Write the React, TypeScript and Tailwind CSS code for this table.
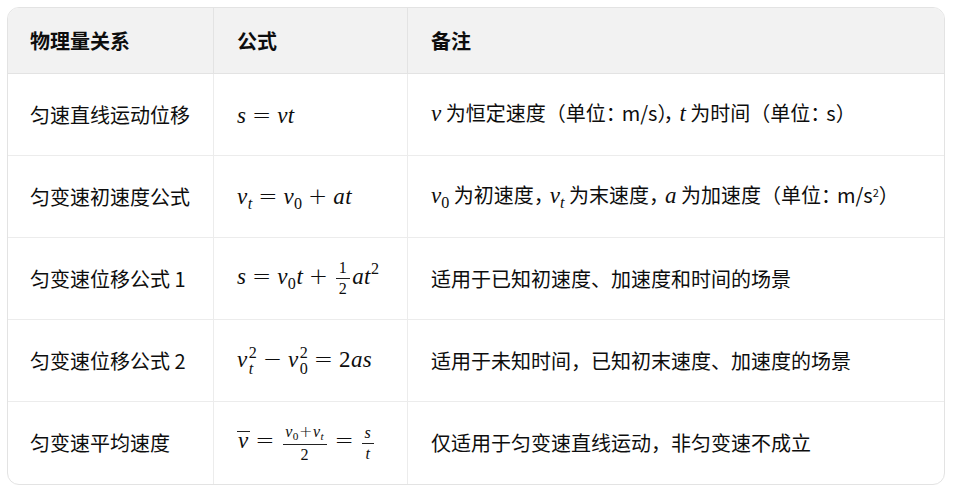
import type { ReactNode } from "react";

const mathFont = "font-['Liberation_Serif',serif]";

function M({ children }: { children: ReactNode }) {
  return <span className={`${mathFont} text-[23px] italic leading-none whitespace-nowrap tracking-[0.02em]`}>{children}</span>;
}

function Up({ children }: { children: ReactNode }) {
  return <span className="not-italic">{children}</span>;
}

function Sub({ children }: { children: ReactNode }) {
  return <span className="text-[0.7em] align-[-0.3em]">{children}</span>;
}

function Sup({ children }: { children: ReactNode }) {
  return <span className="not-italic text-[0.7em] align-[0.6em]">{children}</span>;
}

function SupSub({ sup, sub }: { sup: ReactNode; sub: ReactNode }) {
  return (
    <span className="inline-flex flex-col text-[0.7em] leading-[1] align-[0.55em] ml-[1px]">
      <span className="not-italic">{sup}</span>
      <span>{sub}</span>
    </span>
  );
}

// operators: DejaVu Sans gives the wider = + − of TeX fonts
function Op({ children, small }: { children: ReactNode; small?: boolean }) {
  return (
    <span
      className={`not-italic font-['DejaVu_Sans',sans-serif] font-light ${small ? "" : "mx-[0.24em]"}`}
    >
      {children}
    </span>
  );
}

function Frac({ num, den }: { num: ReactNode; den: ReactNode }) {
  return (
    <span className="inline-flex flex-col items-center align-middle text-[0.7em] leading-[1.1] mx-[0.15em]">
      <span className="px-[0.15em] pb-[1px] border-b border-[#222]">{num}</span>
      <span className="px-[0.15em] pt-[1px]">{den}</span>
    </span>
  );
}

function Note({ children }: { children: ReactNode }) {
  return <span className={`${mathFont} text-[23px] italic`}>{children}</span>;
}

// closing fullwidth punctuation, trimmed a little like the reference font
function Close({ children }: { children: ReactNode }) {
  return <span className="tracking-[-0.2em]">{children}</span>;
}

const rows: { name: string; formula: ReactNode; note: ReactNode }[] = [
  {
    name: "匀速直线运动位移",
    formula: (
      <M>
        s<Op>=</Op>vt
      </M>
    ),
    note: (
      <>
        <Note>v</Note> 为恒定速度（单位<Close>：</Close>m/s<Close>）</Close>
        <Close>，</Close>
        <Note>t</Note> 为时间（单位<Close>：</Close>s<Close>）</Close>
      </>
    ),
  },
  {
    name: "匀变速初速度公式",
    formula: (
      <M>
        v<Sub>t</Sub>
        <Op>=</Op>v<Sub><Up>0</Up></Sub>
        <Op>+</Op>at
      </M>
    ),
    note: (
      <>
        <Note>
          v<Sub><Up>0</Up></Sub>
        </Note>{" "}
        为初速度<Close>，</Close>
        <Note>
          v<Sub>t</Sub>
        </Note>{" "}
        为末速度<Close>，</Close>
        <Note>a</Note> 为加速度（单位<Close>：</Close>m/s<sup className="text-[11px]">2</sup>
        <Close>）</Close>
      </>
    ),
  },
  {
    name: "匀变速位移公式 1",
    formula: (
      <M>
        s<Op>=</Op>v<Sub><Up>0</Up></Sub>t<Op>+</Op>
        <Frac num={<Up>1</Up>} den={<Up>2</Up>} />
        at<Sup>2</Sup>
      </M>
    ),
    note: "适用于已知初速度、加速度和时间的场景",
  },
  {
    name: "匀变速位移公式 2",
    formula: (
      <M>
        v<SupSub sup="2" sub="t" />
        <Op>−</Op>v<SupSub sup="2" sub={<Up>0</Up>} />
        <Op>=</Op>
        <Up>2</Up>as
      </M>
    ),
    note: "适用于未知时间，已知初末速度、加速度的场景",
  },
  {
    name: "匀变速平均速度",
    formula: (
      <M>
        <span className="inline-block border-t border-[#222] leading-[0.8] px-[1px]">v</span>
        <Op>=</Op>
        <Frac
          num={
            <>
              v<Sub><Up>0</Up></Sub>
              <Op small>+</Op>v<Sub>t</Sub>
            </>
          }
          den={<Up>2</Up>}
        />
        <Op>=</Op>
        <Frac num="s" den="t" />
      </M>
    ),
    note: "仅适用于匀变速直线运动，非匀变速不成立",
  },
];

export default function App() {
  return (
    <div className="w-[955px] h-[494px] bg-white p-[7px] pr-[10px] font-['Noto_Sans_CJK_SC','Noto_Sans',sans-serif] text-[20px] text-[#0d0d0d]">
      <div className="rounded-[12px] border border-[#e3e3e3] overflow-hidden">
        <div className="grid grid-cols-[206px_194px_1fr] h-[66px] bg-[#f2f2f2] border-b border-[#e3e3e3] font-bold">
          <div className="flex items-center pl-[22px] border-r border-[#e3e3e3]">物理量关系</div>
          <div className="flex items-center pl-[23px] border-r border-[#e3e3e3]">公式</div>
          <div className="flex items-center pl-[23px]">备注</div>
        </div>
        {rows.map((r, i) => (
          <div
            key={r.name}
            className={`grid grid-cols-[206px_194px_1fr] h-[82px] ${i < rows.length - 1 ? "border-b border-[#ececec]" : ""}`}
          >
            <div className="flex items-center pl-[22px] border-r border-[#ececec]">{r.name}</div>
            <div className="flex items-center pl-[23px] border-r border-[#ececec]">
              <span>{r.formula}</span>
            </div>
            <div className="flex items-center pl-[23px] whitespace-nowrap">
              <span>{r.note}</span>
            </div>
          </div>
        ))}
      </div>
    </div>
  );
}
